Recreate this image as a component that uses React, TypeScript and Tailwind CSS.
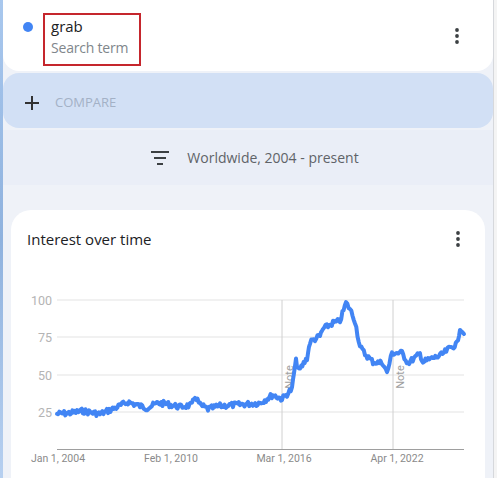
import React from 'react';

const BLUE = '#4285f4';

// rough shape of the trend line, page coordinates
const KEYS: [number, number][] = [
  [57, 413], [70, 412], [83, 410], [100, 413], [115, 407], [128, 401], [140, 405],
  [147, 407], [158, 402], [167, 403], [180, 406], [192, 404], [195, 395], [200, 404],
  [208, 408], [220, 405], [233, 404], [248, 403], [260, 402], [273, 394], [282, 398],
  [292, 388], [294, 372], [296, 360], [299, 370], [307, 357], [310, 341], [320, 335],
  [323, 328], [333, 322], [340, 320], [346, 302], [350, 308], [355, 320], [360, 346],
  [365, 353], [373, 361], [383, 362], [387, 372], [392, 352], [402, 352], [408, 362],
  [420, 353], [423, 361], [433, 357], [440, 355], [450, 347], [457, 343], [460, 327],
  [464, 333],
];

function buildPath() {
  let seed = 7;
  const rnd = () => {
    seed = (seed * 9301 + 49297) % 233280;
    return seed / 233280;
  };
  const pts: string[] = [];
  for (let i = 0; i < KEYS.length - 1; i++) {
    const [x0, y0] = KEYS[i];
    const [x1, y1] = KEYS[i + 1];
    const steps = Math.max(1, Math.round((x1 - x0) / 1.2));
    for (let s = 0; s < steps; s++) {
      const t = s / steps;
      const x = x0 + (x1 - x0) * t;
      const y = y0 + (y1 - y0) * t + (rnd() - 0.5) * 5.5;
      pts.push(`${x.toFixed(1)},${y.toFixed(1)}`);
    }
  }
  const last = KEYS[KEYS.length - 1];
  pts.push(`${last[0]},${last[1]}`);
  return 'M' + pts.join(' L');
}

const LINE = buildPath();

function Kebab() {
  return (
    <svg width="6" height="16" viewBox="0 0 6 16" className="shrink-0">
      <circle cx="3" cy="2" r="1.9" fill="#3c4043" />
      <circle cx="3" cy="8" r="1.9" fill="#3c4043" />
      <circle cx="3" cy="14" r="1.9" fill="#3c4043" />
    </svg>
  );
}

function Chart() {
  const grid = [299, 336, 374, 411];
  const yLabels = ['100', '75', '50', '25'];
  const xLabels: [number, string][] = [
    [58, 'Jan 1, 2004'],
    [171, 'Feb 1, 2010'],
    [284, 'Mar 1, 2016'],
    [397, 'Apr 1, 2022'],
  ];
  return (
    <svg width="474" height="200" viewBox="0 0 474 200" className="block">
      <g transform="translate(-11,-276)" fontFamily="Roboto, 'Liberation Sans', sans-serif">
        {grid.map((y, i) => (
          <g key={y}>
            <line x1="57" x2="464" y1={y} y2={y} stroke="#e3e3e3" strokeWidth="1" />
            <text x="52" y={y + 4.5} textAnchor="end" fontSize="12.5" fill="#b4b4b4">
              {yLabels[i]}
            </text>
          </g>
        ))}
        <line x1="282" x2="282" y1="299" y2="448" stroke="#d0d0d0" strokeWidth="1" />
        <line x1="393" x2="393" y1="299" y2="448" stroke="#d0d0d0" strokeWidth="1" />
        <text
          transform="translate(293,376) rotate(-90)"
          textAnchor="middle"
          fontSize="11"
          fill="#a0a0a0"
        >
          Note
        </text>
        <text
          transform="translate(404,376) rotate(-90)"
          textAnchor="middle"
          fontSize="11"
          fill="#a0a0a0"
        >
          Note
        </text>
        <line x1="57" x2="464" y1="448.5" y2="448.5" stroke="#9e9e9e" strokeWidth="1" />
        <path d={LINE} fill="none" stroke={BLUE} strokeWidth="4" strokeLinejoin="round" strokeLinecap="round" />
        {xLabels.map(([x, t]) => (
          <text key={t} x={x} y="461" textAnchor="middle" fontSize="10.5" fill="#8a8a8a">
            {t}
          </text>
        ))}
      </g>
    </svg>
  );
}

export default function App() {
  return (
    <div
      className="w-[497px] h-[478px] overflow-hidden flex bg-[#eff2f8]"
      style={{ fontFamily: "'Open Sans', Roboto, 'Liberation Sans', sans-serif" }}
    >
      <div className="w-[3px] shrink-0 bg-gradient-to-b from-[#a9c8ee] via-[#8fb2de] to-[#b7d0f0]" />

      <div className="w-[490px] shrink-0 flex flex-col">
        {/* search term card */}
        <div className="h-[71px] shrink-0 bg-white rounded-b-2xl flex items-start pl-[20px] pr-[33px]">
          <div className="w-[10px] h-[10px] rounded-full bg-[#4285f4] mt-[22px]" />
          <div className="ml-[10px] mt-[13px] w-[98px] h-[53px] border-2 border-[#c5262d] pl-[6px] pt-[1px]">
            <div className="text-[15px] leading-[20px] text-[#202124]">grab</div>
            <div className="text-[14px] leading-[20px] text-[#80868b] mt-[2px] tracking-[-0.2px]">Search term</div>
          </div>
          <div className="ml-auto mt-[28px]">
            <Kebab />
          </div>
        </div>

        {/* compare */}
        <div className="mt-[2px] h-[55px] shrink-0 bg-[#d2e0f5] rounded-2xl flex items-center pl-[22px] pt-[5px]">
          <svg width="14" height="14" viewBox="0 0 14 14">
            <path d="M7 0v14M0 7h14" stroke="#333" strokeWidth="2" />
          </svg>
          <span className="ml-[16px] text-[13px] text-[#a3b1c6]">COMPARE</span>
        </div>

        {/* filters */}
        <div className="mt-[2px] h-[55px] shrink-0 bg-[#eaeef7] flex items-center justify-center gap-[18px] pl-[14px]">
          <svg width="18" height="14" viewBox="0 0 18 14">
            <path d="M0 1h18M3 7h12M6 13h6" stroke="#3c4043" strokeWidth="2" />
          </svg>
          <span className="text-[14px] text-[#5f6368]">Worldwide, 2004 - present</span>
        </div>

        {/* interest over time */}
        <div className="mt-[25px] ml-[8px] w-[474px] flex-1 bg-white rounded-t-[20px] flex flex-col">
          <div className="flex items-center justify-between pl-[16px] pr-[24px] pt-[18px]">
            <span className="text-[15px] text-[#202124]">Interest over time</span>
            <Kebab />
          </div>
          <div className="mt-[26px]">
            <Chart />
          </div>
        </div>
      </div>

      <div className="flex-1 flex">
        <div className="w-px bg-[#d6d8dc]" />
        <div className="flex-1 bg-[#f4f4f4]" />
      </div>
    </div>
  );
}
